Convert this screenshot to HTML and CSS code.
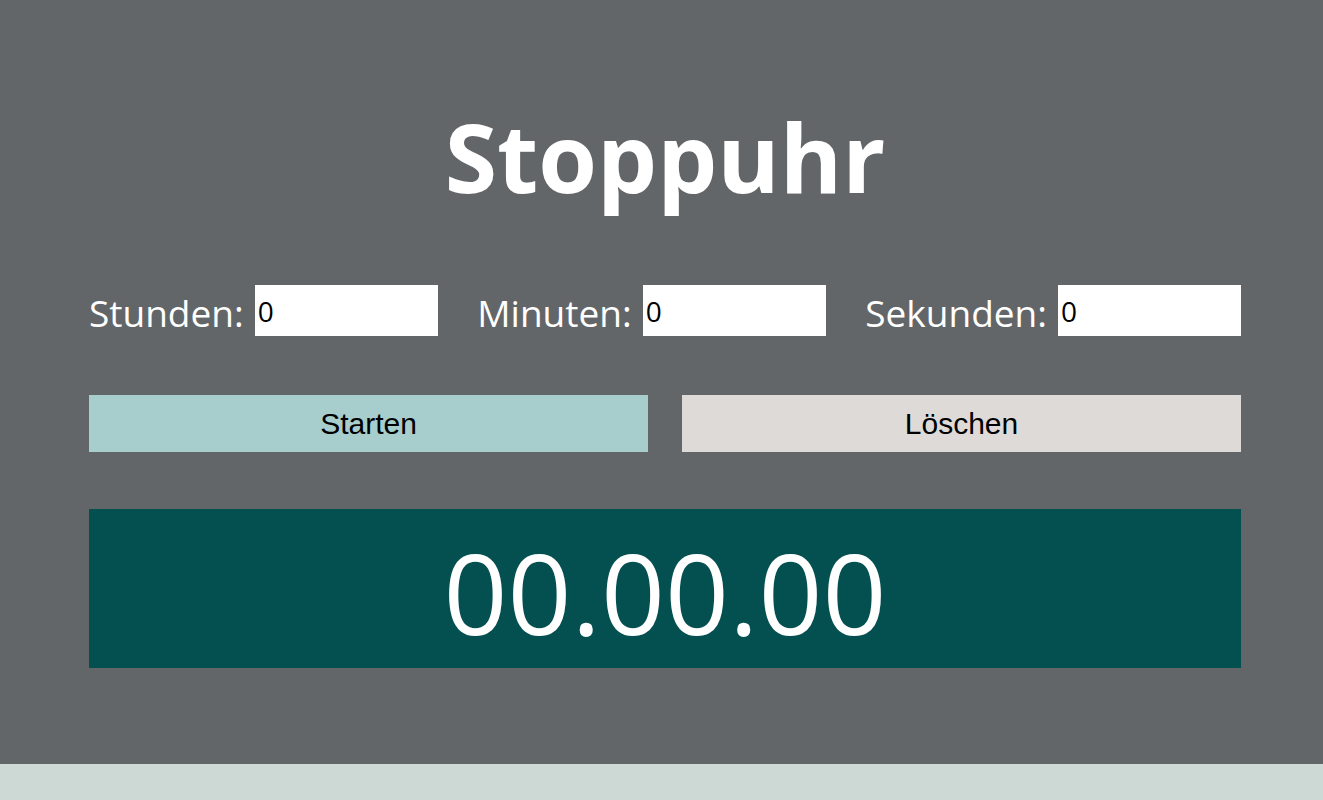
FILE: index.html
```html
<!DOCTYPE html>
<html lang="de">
<head>
<meta charset="utf-8">
<title>Stoppuhr</title>
<link rel="stylesheet" href="styles.css">
</head>
<body>
<main class="page">
  <div class="wrap">
    <h1 class="title">Stoppuhr</h1>
    <div class="inputs">
      <label class="field"><span class="lbl">Stunden:</span><input class="num" type="text" value="0"></label>
      <label class="field"><span class="lbl">Minuten:</span><input class="num" type="text" value="0"></label>
      <label class="field"><span class="lbl">Sekunden:</span><input class="num" type="text" value="0"></label>
    </div>
    <div class="buttons">
      <button class="btn start">Starten</button>
      <button class="btn clear">Löschen</button>
    </div>
    <div class="display">00.00.00</div>
  </div>
</main>
<footer class="foot"></footer>
</body>
</html>
```
FILE: styles.css
```css
html, body {
  margin: 0;
  padding: 0;
}
body {
  background: #ccd9d4;
  font-family: "Open Sans", "Noto Sans", sans-serif;
}
.page {
  display: block;
  background: #636669;
  height: 764px;
  overflow: hidden;
}
.foot {
  height: 36px;
  background: #ccd9d4;
}
.wrap {
  width: 1152px;
  margin-left: 89px;
  padding-top: 101px;
}
.title {
  margin: 0;
  text-align: center;
  color: #fff;
  font-weight: 700;
  font-size: 95px;
  line-height: 110px;
}
.inputs {
  display: flex;
  justify-content: space-between;
  align-items: center;
  margin-top: 74px;
  height: 51px;
}
.field {
  display: flex;
  align-items: center;
}
.lbl {
  color: #fff;
  font-size: 37px;
  margin-right: 11px;
  line-height: 51px;
  padding-top: 3px;
}
.num {
  width: 183px;
  height: 51px;
  box-sizing: border-box;
  border: none;
  padding: 0 3px;
  font-family: "Open Sans", sans-serif;
  font-size: 28px;
  color: #000;
  background: #fff;
  outline: none;
}
.buttons {
  display: flex;
  gap: 34px;
  margin-top: 59px;
}
.btn {
  flex: 1;
  height: 57px;
  border: none;
  font-family: "Liberation Sans", Arial, sans-serif;
  font-size: 30px;
  color: #000;
  padding: 0;
}
.start { background: #a7cecd; }
.clear { background: #dedad8; }
.display {
  margin-top: 57px;
  height: 159px;
  box-sizing: border-box;
  padding-top: 6px;
  background: #044f4f;
  color: #fff;
  text-align: center;
  font-size: 112px;
  line-height: 153px;
}
```
